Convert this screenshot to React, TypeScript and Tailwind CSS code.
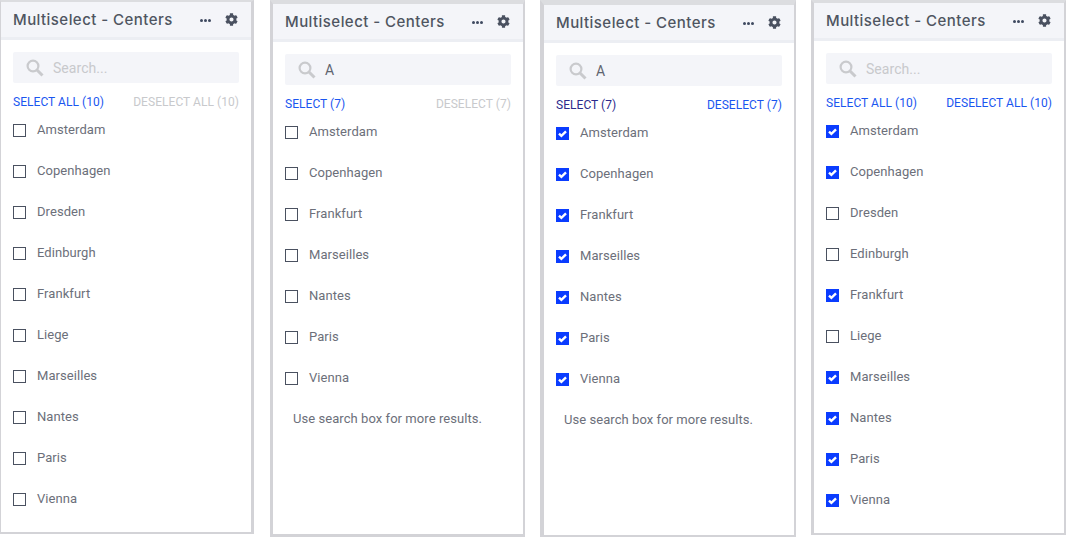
import React from "react";
import { FaCog } from "react-icons/fa";

const cities = ["Amsterdam","Copenhagen","Dresden","Edinburgh","Frankfurt","Liege","Marseilles","Nantes","Paris","Vienna"];
const filtered = ["Amsterdam","Copenhagen","Frankfurt","Marseilles","Nantes","Paris","Vienna"];

function Check() {
  return (
    <svg width="13" height="13" viewBox="0 0 13 13" fill="none">
      <path d="M3 6.6l2.4 2.2 4.6-4.5" stroke="#fff" strokeWidth="2.4" />
    </svg>
  );
}

function Panel({ frame, value, items, selectLabel, deselectLabel, selectClass, deselectClass, checked, note }: {
  frame: string; value?: string; items: string[]; selectLabel: string; deselectLabel: string;
  selectClass: string; deselectClass: string; checked: string[]; note?: boolean;
}) {
  return (
    <div className={`shrink-0 bg-white border-[#d3d3d7] border-t-[#dcdde0] ${frame}`}>
      <div className="h-[38px] bg-[#f4f5f9] border-b-[3px] border-[#eceef3] flex items-center justify-between pl-[12px] pr-[13px]">
        <span className="text-[15px] font-medium text-[#4f5561] font-['Inter',sans-serif] leading-none tracking-[0.45px]">Multiselect - Centers</span>
        <div className="flex items-center gap-[14px]">
          <span className="flex gap-[1px] mt-[1px]">
            <i className="block w-[3px] h-[3px] rounded-full bg-[#3f4a60]" />
            <i className="block w-[3px] h-[3px] rounded-full bg-[#3f4a60]" />
            <i className="block w-[3px] h-[3px] rounded-full bg-[#3f4a60]" />
          </span>
          <FaCog size={13} color="#4a5160" />
        </div>
      </div>
      <div className="px-[12px] pt-[12px] font-['Roboto',sans-serif]">
        <div className="h-[31px] bg-[#f4f5f9] rounded-[2px] flex items-center pl-[13px]">
          <svg width="18" height="18" viewBox="0 0 18 18" fill="none" stroke="#c9cacd" strokeWidth="2.2">
            <circle cx="7" cy="7" r="5.4" />
            <path d="M11 11l5.5 5.5" strokeWidth="3" />
          </svg>
          <span className={`ml-[9px] pt-[2px] text-[14px] tracking-[0.05px] ${value ? "text-[#60646f]" : "text-[#c8c9cc]"}`}>{value ?? "Search..."}</span>
        </div>
        <div className="flex justify-between mt-[11px] text-[12px] leading-[16px] h-[16px] tracking-[0.05px]">
          <span className={selectClass}>{selectLabel}</span>
          <span className={deselectClass}>{deselectLabel}</span>
        </div>
        <div className="mt-[11px]">
          {items.map((c) => {
            const on = checked.includes(c);
            return (
              <div key={c} className="h-[41px] flex items-start">
                <span className={`mt-[3px] w-[13px] h-[13px] flex items-center justify-center ${on ? "bg-[#0a3cff]" : "border border-[#4a5160] bg-white"}`}>
                  {on && <Check />}
                </span>
                <span className="ml-[11px] text-[13px] leading-[17px] text-[#6c6f7a] tracking-[0.06px]">{c}</span>
              </div>
            );
          })}
        </div>
        {note && <div className="pl-[8px] text-[13px] leading-[17px] text-[#6c6f7a] tracking-[0.06px]">Use search box for more results.</div>}
      </div>
    </div>
  );
}

export default function App() {
  const blue = "text-[#1a56f0]";
  const grey = "text-[#c8c9cc]";
  return (
    <div className="w-[1087px] h-[553px] bg-white overflow-hidden flex items-start">
      <Panel frame="w-[254px] h-[534px] border-l-[1px] border-r-[3px] border-t-[2px] border-b-[2px]" items={cities} selectLabel="SELECT ALL (10)" deselectLabel="DESELECT ALL (10)" selectClass={blue} deselectClass={grey} checked={[]} />
      <div className="w-[16px] shrink-0" />
      <Panel frame="w-[255px] h-[537px] border-l-[3px] border-r-[2px] border-t-[4px] border-b-[3px]" value="A" items={filtered} selectLabel="SELECT (7)" deselectLabel="DESELECT (7)" selectClass={blue} deselectClass={grey} checked={[]} note />
      <div className="w-[15px] shrink-0" />
      <Panel frame="w-[256px] h-[537px] border-l-[4px] border-r-[2px] border-t-[5px] border-b-[2px]" value="A" items={filtered} selectLabel="SELECT (7)" deselectLabel="DESELECT (7)" selectClass="text-[#2c2a8c]" deselectClass={blue} checked={filtered} note />
      <div className="w-[15px] shrink-0" />
      <Panel frame="w-[255px] h-[535px] border-l-[3px] border-r-[2px] border-t-[3px] border-b-[2px]" items={cities} selectLabel="SELECT ALL (10)" deselectLabel="DESELECT ALL (10)" selectClass={blue} deselectClass={blue} checked={["Amsterdam","Copenhagen","Frankfurt","Marseilles","Nantes","Paris","Vienna"]} />
    </div>
  );
}
